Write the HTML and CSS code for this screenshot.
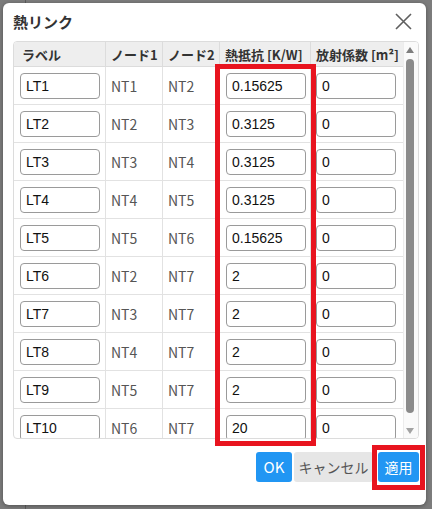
FILE: index.html
```html
<!DOCTYPE html>
<html lang="ja">
<head>
<meta charset="utf-8">
<title>熱リンク</title>
<link rel="stylesheet" href="styles.css">
</head>
<body>
<div class="dialog">
  <div class="dialog-header">
    <h1 class="dialog-title">熱リンク</h1>
    <button class="close-btn" aria-label="閉じる">
      <svg width="17" height="17" viewBox="0 0 17 17"><path d="M1 1 L16 16 M16 1 L1 16" stroke="#5f5f5f" stroke-width="1.6" fill="none"/></svg>
    </button>
  </div>
  <div class="table-wrap">
    <div class="table-scroll">
      <table class="grid">
        <colgroup>
          <col class="c1"><col class="c2"><col class="c3"><col class="c4"><col class="c5">
        </colgroup>
        <thead>
          <tr><th>ラベル</th><th>ノード1</th><th>ノード2</th><th>熱抵抗 [K/W]</th><th>放射係数 [m²]</th></tr>
        </thead>
        <tbody>
          <tr><td><input class="field" value="LT1"></td><td>NT1</td><td>NT2</td><td><input class="field" value="0.15625"></td><td><input class="field" value="0"></td></tr>
          <tr><td><input class="field" value="LT2"></td><td>NT2</td><td>NT3</td><td><input class="field" value="0.3125"></td><td><input class="field" value="0"></td></tr>
          <tr><td><input class="field" value="LT3"></td><td>NT3</td><td>NT4</td><td><input class="field" value="0.3125"></td><td><input class="field" value="0"></td></tr>
          <tr><td><input class="field" value="LT4"></td><td>NT4</td><td>NT5</td><td><input class="field" value="0.3125"></td><td><input class="field" value="0"></td></tr>
          <tr><td><input class="field" value="LT5"></td><td>NT5</td><td>NT6</td><td><input class="field" value="0.15625"></td><td><input class="field" value="0"></td></tr>
          <tr><td><input class="field" value="LT6"></td><td>NT2</td><td>NT7</td><td><input class="field" value="2"></td><td><input class="field" value="0"></td></tr>
          <tr><td><input class="field" value="LT7"></td><td>NT3</td><td>NT7</td><td><input class="field" value="2"></td><td><input class="field" value="0"></td></tr>
          <tr><td><input class="field" value="LT8"></td><td>NT4</td><td>NT7</td><td><input class="field" value="2"></td><td><input class="field" value="0"></td></tr>
          <tr><td><input class="field" value="LT9"></td><td>NT5</td><td>NT7</td><td><input class="field" value="2"></td><td><input class="field" value="0"></td></tr>
          <tr><td><input class="field" value="LT10"></td><td>NT6</td><td>NT7</td><td><input class="field" value="20"></td><td><input class="field" value="0"></td></tr>
        </tbody>
      </table>
    </div>
    <div class="scrollbar" aria-hidden="true">
      <span class="sb-up"></span>
      <span class="sb-thumb"></span>
      <span class="sb-down"></span>
    </div>
  </div>
  <div class="dialog-footer">
    <button class="btn btn-primary btn-ok">OK</button>
    <button class="btn btn-cancel">キャンセル</button>
    <button class="btn btn-primary btn-apply">適用</button>
  </div>
  <div class="highlight hl-column"></div>
  <div class="highlight hl-apply"></div>
</div>
</body>
</html>
```
FILE: styles.css
```css
html, body {
  margin: 0;
  padding: 0;
}
body {
  width: 432px;
  height: 509px;
  overflow: hidden;
  background: linear-gradient(to right, #7c7c7c 25px, #5c5c5c 25px, #5c5c5c 26px, #7c7c7c 26px);
  font-family: "Noto Sans CJK JP", "Noto Sans", sans-serif;
  color: #333;
}
.dialog {
  position: relative;
  box-sizing: border-box;
  margin: 3px 0 0 3px;
  width: 423px;
  height: 502px;
  background: #fff;
  border-radius: 6px;
  box-shadow: 0 1px 4px rgba(0,0,0,0.35);
  padding: 0 7px 0 10px;
  display: flex;
  flex-direction: column;
}
.dialog-header {
  height: 38px;
  display: flex;
  align-items: center;
  justify-content: space-between;
  flex: none;
}
.dialog-title {
  margin: 0;
  font-size: 15px;
  font-weight: 700;
  color: #333;
  line-height: 20px;
}
.close-btn {
  width: 24px;
  height: 24px;
  margin-right: 4px;
  margin-top: -1px;
  padding: 0;
  border: 0;
  background: transparent;
  display: flex;
  align-items: center;
  justify-content: center;
}
.table-wrap {
  flex: none;
  height: 398px;
  box-sizing: border-box;
  border: 1px solid #dcdcdc;
  border-radius: 4px;
  overflow: hidden;
  display: flex;
}
.table-scroll {
  flex: 1;
  overflow: hidden;
}
.scrollbar {
  flex: none;
  width: 15px;
  box-sizing: border-box;
  background: #fafafa;
  border-left: 1px solid #ececec;
  padding: 5px 0 0 2px;
  display: flex;
  flex-direction: column;
}
.sb-up,
.sb-down {
  width: 0;
  height: 0;
  border-left: 4px solid transparent;
  border-right: 4px solid transparent;
}
.sb-up {
  border-bottom: 6px solid #7e7e7e;
}
.sb-thumb {
  margin-top: 6px;
  width: 8px;
  height: 354px;
  border-radius: 4px;
  background: #8b8b8b;
}
.sb-down {
  margin-top: 15px;
  border-top: 6px solid #a3a3a3;
}
.grid {
  table-layout: fixed;
  width: 389px;
  border-collapse: separate;
  border-spacing: 0;
}
.c1 { width: 92px; }
.c2 { width: 57px; }
.c3 { width: 57px; }
.c4 { width: 91px; }
.c5 { width: 92px; }
.grid th {
  height: 25px;
  box-sizing: border-box;
  padding: 0 5px;
  background: #eeeeee;
  font-size: 13px;
  font-weight: 700;
  color: #333;
  text-align: left;
  white-space: nowrap;
  border-right: 1px solid #dcdcdc;
  border-bottom: 1px solid #dcdcdc;
}
.grid th:first-child { padding-left: 8px; }
.grid td {
  height: 38px;
  box-sizing: border-box;
  padding: 0 5px 0 5px;
  font-size: 14px;
  color: #555;
  border-right: 1px solid #e2e2e2;
  border-bottom: 1px solid #e2e2e2;
  vertical-align: middle;
  white-space: nowrap;
}
.grid td:first-child,
.grid td:nth-child(4) { padding-left: 6px; }
.grid th:last-child,
.grid td:last-child { border-right: 0; }
.field {
  box-sizing: border-box;
  width: 80px;
  height: 26px;
  margin: 0;
  padding: 0 5px;
  border: 1px solid #9a9a9a;
  border-radius: 4px;
  font-family: "Liberation Sans", Arial, sans-serif;
  font-size: 14px;
  color: #111;
  background: #fff;
  display: block;
}
.dialog-footer {
  flex: none;
  display: flex;
  justify-content: flex-end;
  padding-top: 13px;
}
.btn {
  height: 30px;
  border: 0;
  border-radius: 3px;
  padding: 0;
  font-family: "Noto Sans CJK JP", "Noto Sans", sans-serif;
  font-size: 14px;
  line-height: 30px;
}
.btn-primary {
  background: #2196f3;
  color: #fff;
}
.btn-ok { width: 36px; font-size: 15px; }
.btn-cancel {
  width: 79px;
  margin-left: 2px;
  background: #e6e6e6;
  color: #555;
}
.btn-apply {
  width: 41px;
  margin-left: 5px;
}
.highlight {
  position: absolute;
  box-sizing: border-box;
  border: 5px solid #e8141f;
  pointer-events: none;
}
.hl-column {
  left: 212px;
  top: 61px;
  width: 101px;
  height: 382px;
}
.hl-apply {
  left: 369px;
  top: 442px;
  width: 53px;
  height: 45px;
}
```
